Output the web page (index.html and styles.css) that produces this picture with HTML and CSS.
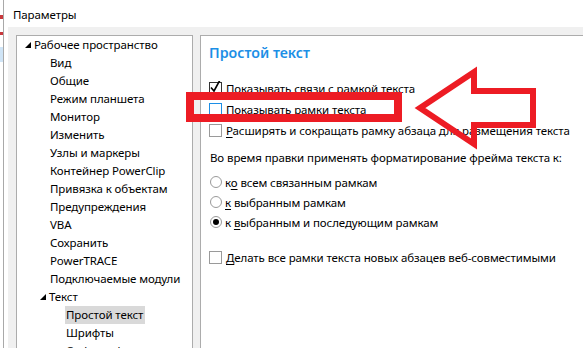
FILE: index.html
```html
<!DOCTYPE html>
<html lang="ru">
<head>
  <meta charset="UTF-8">
  <title>Параметры</title>
  <link rel="stylesheet" href="styles.css">
</head>
<body>
  <div class="desk">
    <div class="behind">
      <span class="mark red"></span>
      <span class="mark red2"></span>
      <span class="mark blue"></span>
    </div>
    <div class="window">
      <div class="titlebar">Параметры</div>
      <div class="dlg-body">
        <ul class="tree">
          <li class="lvl0"><span class="tw"><i class="tri"></i></span><span class="lbl">Рабочее пространство</span></li>
          <li class="lvl1"><span class="tw"></span><span class="lbl">Вид</span></li>
          <li class="lvl1"><span class="tw"></span><span class="lbl">Общие</span></li>
          <li class="lvl1"><span class="tw"></span><span class="lbl">Режим планшета</span></li>
          <li class="lvl1"><span class="tw"></span><span class="lbl">Монитор</span></li>
          <li class="lvl1"><span class="tw"></span><span class="lbl">Изменить</span></li>
          <li class="lvl1"><span class="tw"></span><span class="lbl">Узлы и маркеры</span></li>
          <li class="lvl1"><span class="tw"></span><span class="lbl">Контейнер PowerClip</span></li>
          <li class="lvl1"><span class="tw"></span><span class="lbl">Привязка к объектам</span></li>
          <li class="lvl1"><span class="tw"></span><span class="lbl">Предупреждения</span></li>
          <li class="lvl1"><span class="tw"></span><span class="lbl">VBA</span></li>
          <li class="lvl1"><span class="tw"></span><span class="lbl">Сохранить</span></li>
          <li class="lvl1"><span class="tw"></span><span class="lbl">PowerTRACE</span></li>
          <li class="lvl1"><span class="tw"></span><span class="lbl">Подключаемые модули</span></li>
          <li class="lvl0 sub"><span class="tw"><i class="tri"></i></span><span class="lbl">Текст</span></li>
          <li class="lvl2"><span class="tw"></span><span class="lbl selected">Простой текст</span></li>
          <li class="lvl2"><span class="tw"></span><span class="lbl">Шрифты</span></li>
          <li class="lvl2"><span class="tw"></span><span class="lbl">Орфография</span></li>
        </ul>

        <div class="page">
          <h2 class="page-title">Простой текст</h2>

          <div class="row first">
            <span class="check on">
              <svg width="13" height="13" viewBox="0 0 13 13"><path d="M2 6.5 L5 10 L11 -1" fill="none" stroke="#000" stroke-width="1.6"/></svg>
            </span>
            <span>Показывать связи с рамкой текста</span>
          </div>
          <div class="row">
            <span class="check focus"></span>
            <span><u>П</u>оказывать рамки текста</span>
          </div>
          <div class="row">
            <span class="check"></span>
            <span><u>Р</u>асширять и сокращать рамку абзаца для размещения текста</span>
          </div>

          <div class="caption">Во время правки применять форматирование фрейма текста к:</div>

          <div class="radio-row first">
            <span class="radio"></span>
            <span>к<u>о</u> всем связанным рамкам</span>
          </div>
          <div class="radio-row">
            <span class="radio"></span>
            <span><u>к</u> выбранным рамкам</span>
          </div>
          <div class="radio-row">
            <span class="radio on"></span>
            <span>к <u>в</u>ыбранным и последующим рамкам</span>
          </div>

          <div class="row last">
            <span class="check"></span>
            <span><u>Д</u>елать все рамки текста новых абзацев веб-совместимыми</span>
          </div>
        </div>
      </div>
    </div>
  </div>

  <!-- annotation drawn on top of the screenshot -->
  <svg class="annot" width="583" height="348" viewBox="0 0 583 348">
    <rect x="190" y="96" width="208" height="22" fill="none" stroke="#ed1c24" stroke-width="8"/>
    <polygon points="420,108 474,72 474,91 533,91 533,125 474,125 474,144" fill="none" stroke="#ed1c24" stroke-width="6"/>
  </svg>
</body>
</html>
```

FILE: styles.css
```css
body {
  margin: 0;
  width: 583px;
  height: 348px;
  overflow: hidden;
  position: relative;
  background: #fff;
  font-family: 'Noto Sans', 'Open Sans', sans-serif;
  font-size: 11.5px;
  letter-spacing: -0.1px;
  color: #000;
}

.desk {
  display: flex;
  height: 348px;
}

.behind {
  width: 3px;
  border-right: 1px solid #a9a9a9;
  background: #fff;
  display: flex;
  flex-direction: column;
}

.mark {
  display: block;
  width: 3px;
}

.mark.red {
  height: 4px;
  margin-top: 15px;
  background: #c8383c;
}

.mark.red2 {
  height: 3px;
  margin-top: 13px;
  background: #c8383c;
}

.mark.blue {
  height: 15px;
  margin-top: 12px;
  background: #cfe4f6;
}

.window {
  flex: 1;
  border-left: 4px solid #fff;
  display: flex;
  flex-direction: column;
}

.titlebar {
  height: 27px;
  line-height: 29px;
  padding-left: 5px;
  background: #fff;
}

.dlg-body {
  flex: 1;
  background: #f0f0f0;
  display: flex;
  gap: 7px;
  padding: 8px 0 0 8px;
}

/* tree on the left */
.tree {
  list-style: none;
  margin: 0;
  padding: 0;
  width: 175px;
  flex: none;
  background: #fff;
  border: 1px solid #acacac;
  border-bottom: none;
  overflow: hidden;
}

.tree li {
  height: 18px;
  line-height: 18px;
  display: flex;
  align-items: center;
  white-space: nowrap;
}

.tree .lvl0 {
  padding-left: 7px;
}

.tree .lvl1 {
  padding-left: 23px;
}

.tree .lvl0.sub {
  padding-left: 22px;
}

.tree .lvl2 {
  padding-left: 39px;
}

.tw {
  width: 9px;
  height: 18px;
  flex: none;
  position: relative;
}

.tri {
  position: absolute;
  left: 1px;
  top: 6px;
  width: 0;
  height: 0;
  border-left: 6px solid transparent;
  border-bottom: 6px solid #000;
}

.lbl {
  padding: 0 2px 0 1px;
  line-height: 18px;
}

.lbl.selected {
  background: #d9d9d9;
}

/* settings page on the right */
.page {
  flex: 1;
  background: #fff;
  border: 1px solid #acacac;
  border-right: none;
  border-bottom: none;
  padding: 7px 0 0 8px;
  display: flex;
  flex-direction: column;
  white-space: nowrap;
  overflow: hidden;
}

.page-title {
  margin: 0;
  font-size: 14.2px;
  line-height: 20px;
  font-weight: 600;
  letter-spacing: 0;
  color: #1c8fe6;
}

.row {
  height: 21px;
  display: flex;
  align-items: center;
  gap: 4px;
}

.row.first {
  margin-top: 15px;
}

.row.last {
  margin-top: 15px;
}

.check {
  width: 11px;
  height: 11px;
  border: 1px solid #9a9a9a;
  background: #fff;
  flex: none;
  position: relative;
}

.check.on {
  border-color: #333;
}

.check.on svg {
  position: absolute;
  left: -1px;
  top: -2px;
}

.check.focus {
  border-color: #1c8fe6;
}

.caption {
  margin-top: 7px;
  height: 20px;
  line-height: 20px;
  padding-left: 1px;
}

.radio-row {
  height: 20px;
  display: flex;
  align-items: center;
  gap: 3px;
  padding-left: 1px;
}

.radio-row.first {
  margin-top: 4px;
}

.radio {
  width: 10px;
  height: 10px;
  border: 1px solid #9a9a9a;
  border-radius: 50%;
  background: #fff;
  flex: none;
  position: relative;
}

.radio.on::after {
  content: "";
  position: absolute;
  left: 2px;
  top: 2px;
  width: 6px;
  height: 6px;
  border-radius: 50%;
  background: #000;
}

u {
  text-decoration-thickness: 1px;
  text-underline-offset: 2px;
}

.annot {
  position: absolute;
  left: 0;
  top: 0;
  pointer-events: none;
}
```
